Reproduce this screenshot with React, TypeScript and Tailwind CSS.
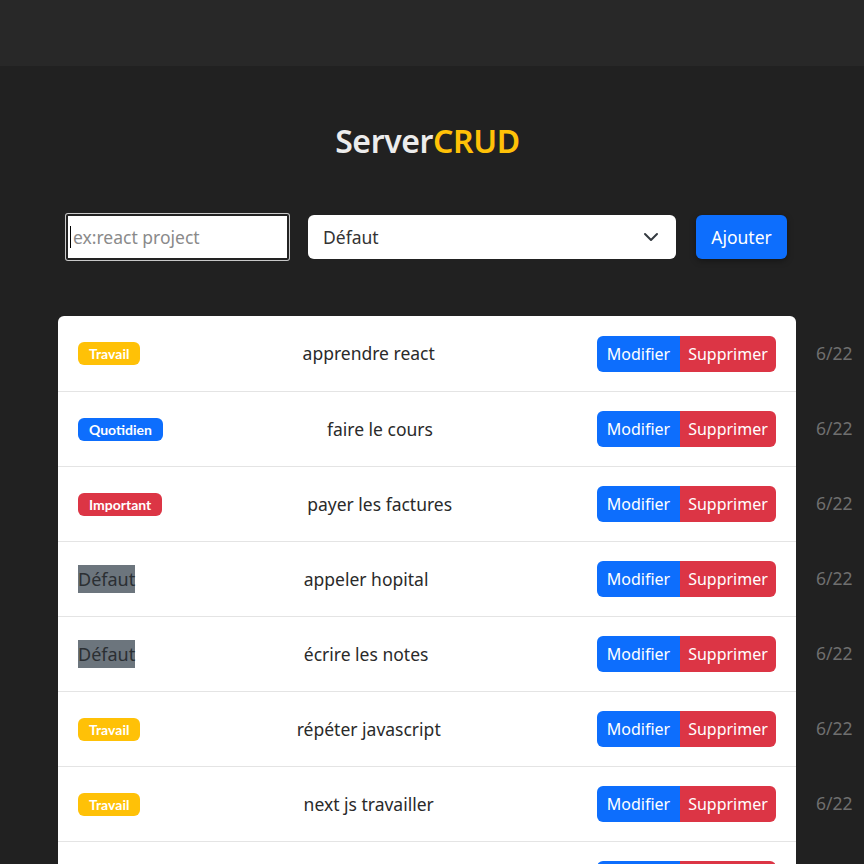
import React from "react";

type Item = { cat: string; text: string };

const items: Item[] = [
  { cat: "Travail", text: "apprendre react" },
  { cat: "Quotidien", text: "faire le cours" },
  { cat: "Important", text: "payer les factures" },
  { cat: "Défaut", text: "appeler hopital" },
  { cat: "Défaut", text: "écrire les notes" },
  { cat: "Travail", text: "répéter javascript" },
  { cat: "Travail", text: "next js travailler" },
];

function Badge({ cat }: { cat: string }) {
  if (cat === "Défaut") {
    return (
      <span className="bg-[#6c757d] text-[#2b2f33] text-[18px] leading-[28px] h-[28px] inline-block">
        Défaut
      </span>
    );
  }
  const cls =
    cat === "Travail"
      ? "bg-[#ffc107]"
      : cat === "Quotidien"
      ? "bg-[#0d6efd]"
      : "bg-[#dc3545]";
  return (
    <span
      className={`${cls} text-white font-bold text-[14px] h-[23px] px-[11px] rounded-[6px] inline-flex items-center`}
      style={{ fontFamily: "Lato, sans-serif" }}
    >
      {cat}
    </span>
  );
}

function Actions({ empty }: { empty?: boolean }) {
  return (
    <div className="flex h-[36px] rounded-[6px] overflow-hidden text-[16px] text-white">
      <button className="bg-[#0d6efd] w-[83px]">{empty ? "" : "Modifier"}</button>
      <button className="bg-[#dc3545] w-[96px]">{empty ? "" : "Supprimer"}</button>
    </div>
  );
}

export default function App() {
  return (
    <div
      className="w-[864px] h-[864px] overflow-hidden bg-[#212121]"
      style={{ fontFamily: "'Noto Sans', 'Open Sans', sans-serif" }}
    >
      <div className="h-[66px] bg-[#282828]" />
      <h1 className="mt-[53px] pr-[9px] text-center text-[32px] font-semibold leading-[44px] tracking-[-0.4px]">
        <span className="text-[#ececec]">Server</span>
        <span className="text-[#ffc107]">CRUD</span>
      </h1>

      <div className="mt-[51px] ml-[66px] flex items-center">
        <div className="w-[223px] h-[46px] bg-white rounded-[2px] border-2 border-[#222] ring-1 ring-[#c8c8c8] flex items-center pl-[2px]">
          <span className="w-[1px] h-[22px] bg-black" />
          <input
            className="ml-[2px] outline-none text-[17.5px] w-full bg-transparent placeholder:text-[#8a8a8a] text-black"
            placeholder="ex:react project"
          />
        </div>
        <div className="ml-[19px] w-[368px] h-[44px] bg-white rounded-[6px] flex items-center justify-between pl-[15px] pr-[17px] text-[17.5px] text-[#333]">
          <span>Défaut</span>
          <svg width="16" height="16" viewBox="0 0 16 16" fill="none" stroke="#343a40" strokeWidth="2" strokeLinecap="round" strokeLinejoin="round">
            <path d="M2 5l6 6 6-6" />
          </svg>
        </div>
        <button className="ml-[20px] w-[91px] h-[44px] bg-[#0d6efd] rounded-[6px] text-white text-[17.5px] shadow-[0_2px_6px_rgba(0,0,0,0.35)]">
          Ajouter
        </button>
      </div>

      <div className="mt-[56px] ml-[58px] flex flex-col">
        {items.map((it, i) => (
          <div key={i} className="flex items-center">
            <div
              className={`w-[738px] h-[75px] bg-white flex items-center justify-between pl-[20px] pr-[20px] border-[#e4e4e4] ${
                i === 0 ? "rounded-t-[6px]" : "border-t"
              }`}
            >
              <Badge cat={it.cat} />
              <span className="text-[17.5px] text-[#2a2a2a]">{it.text}</span>
              <Actions />
            </div>
            <span className="ml-[20px] text-[17.5px] text-[#6f6f6f]">6/22</span>
          </div>
        ))}
        <div className="flex items-center">
          <div className="w-[738px] h-[75px] bg-white flex items-center justify-end pr-[20px] border-t border-[#e4e4e4]">
            <Actions empty />
          </div>
        </div>
      </div>
    </div>
  );
}
